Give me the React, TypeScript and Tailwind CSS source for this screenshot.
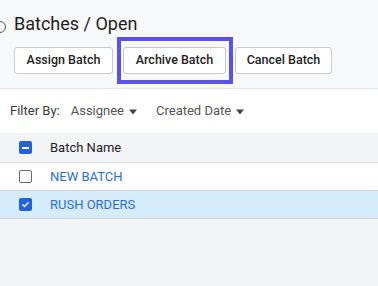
import React from "react";

type Batch = {
  id: string;
  name: string;
  selected: boolean;
};

const batches: Batch[] = [
  { id: "1", name: "NEW BATCH", selected: false },
  { id: "2", name: "RUSH ORDERS", selected: true },
];

const Caret = () => (
  <svg width="8" height="6" viewBox="0 0 8 6" className="ml-[5px] mt-[1px]">
    <path d="M0 0.5h8L4 5.5z" fill="#444" />
  </svg>
);

const Checkbox = ({ state }: { state: "none" | "checked" | "partial" }) => {
  if (state === "none") {
    return <span className="block w-[13px] h-[13px] rounded-[2px] border border-[#6b6b6b] bg-white" />;
  }
  return (
    <span className="flex items-center justify-center w-[13px] h-[13px] rounded-[2px] bg-[#2462d6]">
      {state === "partial" ? (
        <span className="block w-[7px] h-[2px] bg-white" />
      ) : (
        <svg width="9" height="9" viewBox="0 0 9 9">
          <path d="M1.5 4.6l2 2 4-4.4" stroke="white" strokeWidth="1.4" fill="none" />
        </svg>
      )}
    </span>
  );
};

export default function App() {
  return (
    <div className="min-h-[286px] w-full bg-[#f3f4f6] font-['Roboto',sans-serif]">
      {/* header */}
      <div className="bg-[#f7f8fa] border-b border-[#e4e6ea] h-[89px] pl-[14px] relative">
        <span className="absolute left-[-6px] top-[21px] w-[12px] h-[12px] rounded-full border border-[#555]" />
        <h1 className="pt-[12px] text-[18px] leading-[24px] text-[#1e1e1e]">Batches / Open</h1>
        <div className="flex mt-[11px]">
          <button className="h-[27px] w-[99px] bg-white border border-[#c9c9c9] rounded-[3px] text-[12.5px] font-medium text-[#222]">
            Assign Batch
          </button>
          <div className="relative ml-[10px]">
            <button className="h-[27px] w-[103px] bg-white border border-[#c9c9c9] rounded-[3px] text-[12.5px] font-medium text-[#222]">
              Archive Batch
            </button>
            <span className="absolute left-[-6px] right-[-7px] top-[-10px] bottom-[-10px] border-4 border-[#5b50f0] pointer-events-none" />
          </div>
          <button className="h-[27px] w-[97px] ml-[9px] bg-white border border-[#c9c9c9] rounded-[3px] text-[12.5px] font-medium text-[#222]">
            Cancel Batch
          </button>
        </div>
      </div>

      {/* filters */}
      <div className="h-[44px] bg-white flex items-center pl-[10px] text-[13px]">
        <span className="text-[#3a3a3a]">Filter By:</span>
        <span className="flex items-center ml-[11px] text-[#555]">
          Assignee <Caret />
        </span>
        <span className="flex items-center ml-[19px] text-[#555]">
          Created Date <Caret />
        </span>
      </div>

      {/* table */}
      <div className="h-[30px] bg-[#f3f4f6] border-b border-[#d9dce1] flex items-center pl-[19px] text-[13px] text-[#1e1e1e]">
        <Checkbox state="partial" />
        <span className="ml-[18px]">Batch Name</span>
      </div>
      {batches.map((b) => (
        <div
          key={b.id}
          className={`h-[28px] border-b border-[#cfd4da] flex items-center pl-[19px] text-[13px] ${
            b.selected ? "bg-[#d6ecfb]" : "bg-white"
          }`}
        >
          <Checkbox state={b.selected ? "checked" : "none"} />
          <span className="ml-[18px] text-[#2b6de0]">{b.name}</span>
        </div>
      ))}
    </div>
  );
}
